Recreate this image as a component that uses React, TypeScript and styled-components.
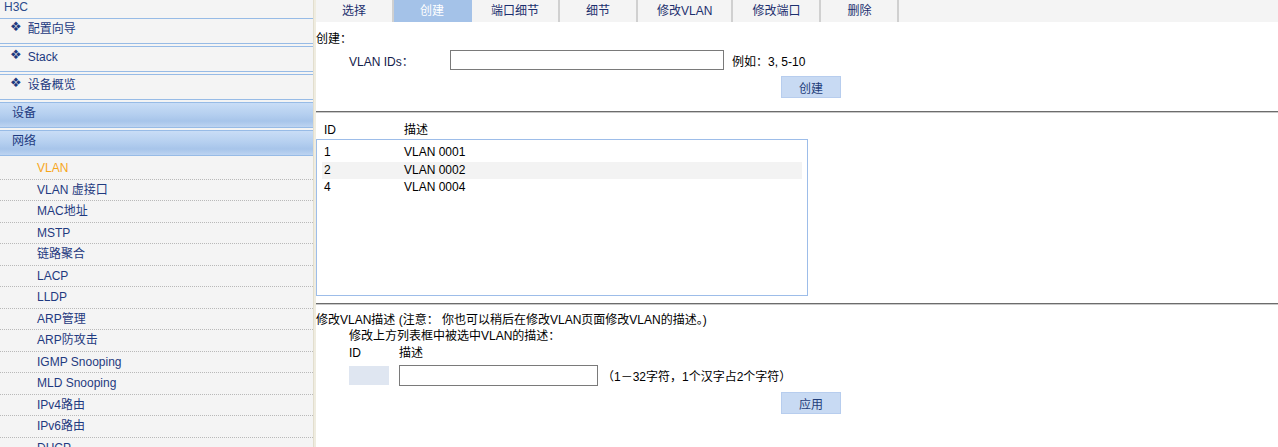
import styled, { createGlobalStyle } from "styled-components";

const GlobalStyle = createGlobalStyle`
  html, body {
    margin: 0;
    padding: 0;
    background: #ffffff;
  }
  body {
    font-family: "Liberation Sans", "Noto Sans CJK SC", Arial, sans-serif;
    font-size: 12px;
    color: #000;
  }
`;

const Page = styled.div`
  display: flex;
  height: 447px;
  overflow: hidden;
`;

const Sidebar = styled.div`
  width: 313px;
  flex-shrink: 0;
  background: #f4f4f4;
  overflow: hidden;
`;

const Brand = styled.div`
  height: 18px;
  line-height: 15px;
  padding-left: 4px;
  color: #2b4a8c;
`;

const MenuBox = styled.div<{ $blue?: boolean }>`
  width: 306px;
  height: 24px;
  line-height: 20px;
  margin-bottom: 2px;
  border: 1px solid #97bbe6;
  border-left: none;
  color: #1d3a80;
  padding-left: ${(p) => (p.$blue ? "12px" : "10px")};
  background: ${(p) =>
    p.$blue
      ? "linear-gradient(to bottom, #c9ddf6 0%, #b6d0f0 45%, #a7c5ea 75%, #bdd4f1 100%)"
      : "#f4f4f4"};
  display: flex;
  align-items: flex-start;
  gap: 6px;
`;

const Diamond = styled.span`
  font-family: "DejaVu Sans", sans-serif;
  font-size: 13px;
  line-height: 20px;
  color: #1d3a80;
  position: relative;
  top: -2px;
`;

const SubItem = styled.div<{ $active?: boolean }>`
  height: 20.5px;
  line-height: 21px;
  padding-left: 37px;
  border-bottom: 1px dotted #b9b9b9;
  color: ${(p) => (p.$active ? "#f7a61c" : "#1f3a80")};
`;

const Splitter = styled.div`
  width: 3px;
  flex-shrink: 0;
  background: #efece0;
  border-left: 1px solid #e2dece;
  box-sizing: border-box;
`;

const Main = styled.div`
  flex: 1;
  background: #fff;
  min-width: 0;
`;

const TabBar = styled.div`
  display: flex;
  height: 22px;
  background: #f4f4f4;
`;

const Tab = styled.div<{ $active?: boolean }>`
  min-width: 78px;
  box-sizing: border-box;
  padding: 0 19px;
  line-height: 22px;
  text-align: center;
  border-right: 2px solid ${(p) => (p.$active ? "#a4c2e8" : "#d0d0d0")};
  background: ${(p) => (p.$active ? "#a4c2e8" : "transparent")};
  color: ${(p) => (p.$active ? "#ffffff" : "#1c2f6e")};
`;

const Section = styled.div<{ $top: number }>`
  padding-top: ${(p) => p.$top}px;
`;

const Title = styled.div`
  line-height: 16px;
`;

const Indented = styled.div`
  display: flex;
  padding-left: 33px;
  line-height: 17px;
`;

const FormRow = styled.div<{ $indent: number; $top: number }>`
  display: flex;
  align-items: center;
  padding-left: ${(p) => p.$indent}px;
  margin-top: ${(p) => p.$top}px;
`;

const FieldLabel = styled.span<{ $width: number }>`
  width: ${(p) => p.$width}px;
  flex-shrink: 0;
  color: #13204a;
`;

const TextInput = styled.input<{ $width: number; $height: number }>`
  width: ${(p) => p.$width}px;
  height: ${(p) => p.$height}px;
  box-sizing: border-box;
  border: 1px solid #7a7a7a;
  padding: 0 3px;
  margin: 0;
  font: inherit;
  background: #fff;
  outline: none;
`;

const Hint = styled.span`
  margin-left: 8px;
  white-space: nowrap;
`;

const ButtonRow = styled.div<{ $top: number }>`
  padding-left: 465px;
  margin-top: ${(p) => p.$top}px;
`;

const ActionButton = styled.button`
  width: 60px;
  height: 22px;
  border: 1px solid #b7cdee;
  background: #c8daf3;
  color: #1f3d7a;
  font: inherit;
  padding: 0;
  cursor: pointer;
`;

const Divider = styled.div<{ $top: number }>`
  margin-top: ${(p) => p.$top}px;
  border-top: 1px solid #6c6c6c;
  border-bottom: 1px solid #c9c9c9;
`;

const ListHeader = styled.div`
  display: flex;
  padding: 9px 0 0 8px;
  line-height: 16px;
  height: 17px;
`;

const Col = styled.span<{ $width: number }>`
  width: ${(p) => p.$width}px;
  flex-shrink: 0;
`;

const ListBox = styled.div`
  width: 492px;
  height: 157px;
  box-sizing: border-box;
  border: 1px solid #9dbde9;
  padding: 4px 5px 0;
`;

const ListRow = styled.div<{ $alt?: boolean }>`
  display: flex;
  height: 17.5px;
  line-height: 17.5px;
  padding-left: 2px;
  background: ${(p) => (p.$alt ? "#f3f3f3" : "transparent")};
`;

const IdCell = styled.div`
  width: 40px;
  height: 19px;
  background: #dfe6f1;
  margin-right: 10px;
`;

const NoteHint = styled.span`
  margin-left: 4px;
  white-space: nowrap;
`;

const groups = ["配置向导", "Stack", "设备概览"];
const sections = ["设备", "网络"];
const subItems = [
  "VLAN",
  "VLAN 虚接口",
  "MAC地址",
  "MSTP",
  "链路聚合",
  "LACP",
  "LLDP",
  "ARP管理",
  "ARP防攻击",
  "IGMP Snooping",
  "MLD Snooping",
  "IPv4路由",
  "IPv6路由",
  "DHCP",
];
const tabs = ["选择", "创建", "端口细节", "细节", "修改VLAN", "修改端口", "删除"];
const vlans = [
  { id: "1", desc: "VLAN 0001" },
  { id: "2", desc: "VLAN 0002" },
  { id: "4", desc: "VLAN 0004" },
];

const App = () => {
  return (
    <>
      <GlobalStyle />
      <Page>
        <Sidebar>
          <Brand>H3C</Brand>
          {groups.map((g) => (
            <MenuBox key={g}>
              <Diamond>❖</Diamond>
              {g}
            </MenuBox>
          ))}
          {sections.map((s) => (
            <MenuBox key={s} $blue>
              {s}
            </MenuBox>
          ))}
          {subItems.map((item, i) => (
            <SubItem key={item} $active={i === 0}>
              {item}
            </SubItem>
          ))}
        </Sidebar>
        <Splitter />
        <Main>
          <TabBar>
            {tabs.map((t) => (
              <Tab key={t} $active={t === "创建"}>
                {t}
              </Tab>
            ))}
          </TabBar>

          <Section $top={9}>
            <Title>创建：</Title>
            <FormRow $indent={33} $top={3}>
              <FieldLabel $width={101}>VLAN IDs：</FieldLabel>
              <TextInput $width={274} $height={20} />
              <Hint>例如：3, 5-10</Hint>
            </FormRow>
            <ButtonRow $top={6}>
              <ActionButton>创建</ActionButton>
            </ButtonRow>
          </Section>

          <Divider $top={13} />
          <ListHeader>
            <Col $width={80}>ID</Col>
            <Col $width={100}>描述</Col>
          </ListHeader>
          <ListBox>
            {vlans.map((v, i) => (
              <ListRow key={v.id} $alt={i === 1}>
                <Col $width={80}>{v.id}</Col>
                <Col $width={200}>{v.desc}</Col>
              </ListRow>
            ))}
          </ListBox>

          <Divider $top={7} />
          <Section $top={7}>
            <Title>修改VLAN描述 (注意： 你也可以稍后在修改VLAN页面修改VLAN的描述。)</Title>
            <Indented>修改上方列表框中被选中VLAN的描述：</Indented>
            <Indented>
              <Col $width={50}>ID</Col>
              <Col $width={60}>描述</Col>
            </Indented>
            <FormRow $indent={33} $top={3}>
              <IdCell />
              <TextInput $width={199} $height={21} />
              <NoteHint>（1－32字符，1个汉字占2个字符）</NoteHint>
            </FormRow>
            <ButtonRow $top={6}>
              <ActionButton>应用</ActionButton>
            </ButtonRow>
          </Section>
        </Main>
      </Page>
    </>
  );
};

export default App;
